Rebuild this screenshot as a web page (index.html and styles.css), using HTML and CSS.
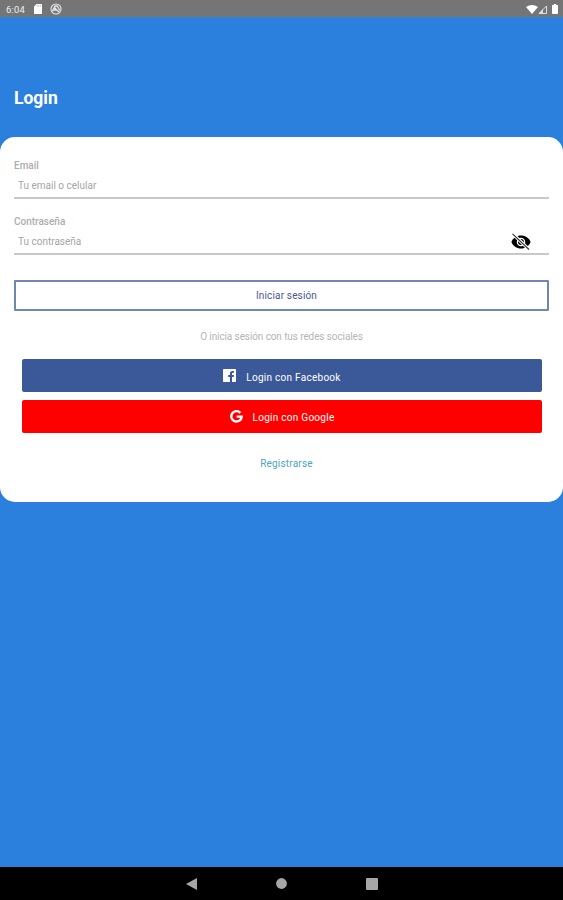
FILE: index.html
```html
<!DOCTYPE html>
<html lang="es">
<head>
  <meta charset="UTF-8">
  <meta name="viewport" content="width=device-width, initial-scale=1.0">
  <title>Login</title>
  <link rel="stylesheet" href="styles.css">
</head>
<body>
  <div class="status-bar">
    <span class="time">6:04</span>
    <svg class="sd" width="8" height="10" viewBox="0 0 8 10"><path fill="#fff" d="M2.6 0H7.2a.8.8 0 0 1 .8.8v8.4a.8.8 0 0 1-.8.8H.8a.8.8 0 0 1-.8-.8V2.6z"/><path stroke="#aaa" stroke-width=".7" d="M3.2 1.2v1.6M4.8 1.2v1.6M6.400 1.2v1.6"/></svg>
    <svg class="sync" width="12" height="12" viewBox="0 0 12 12" fill="none" stroke="#e8e8e8"><circle cx="6" cy="6" r="5" stroke-width="1.1"/><path stroke-width="1.3" d="M2.5 8.3L5 3h2.2l2.5 4.5M4.2 4.3l4.6 4.8M3 7h3.5"/></svg>
    <div class="signals">
      <svg width="12" height="9" viewBox="0 0 12 9"><path fill="#fff" d="M0 2Q6-2 12 2L6 9z"/></svg>
      <svg width="9" height="9" viewBox="0 0 9 9"><path fill="none" stroke="#e0e0e0" d="M8.500 1v7.500H1z"/><path fill="#e0e0e0" d="M5 4v4.500H1z"/></svg>
      <svg class="battery" width="6" height="10" viewBox="0 0 6 10"><path fill="#fff" d="M1.8 0h2.4v1H5.400l.6.6v7.800l-.6.6H.6L0 9.400V1.600L.6 1h1.200z"/></svg>
    </div>
  </div>

  <main>
    <h1>Login</h1>
    <form class="card">
      <label for="email">Email</label>
      <div class="field">
        <input type="text" id="email" placeholder="Tu email o celular">
      </div>
      <label for="password">Contraseña</label>
      <div class="field">
        <input type="password" id="password" placeholder="Tu contraseña">
        <svg class="eye" width="20" height="17" viewBox="0 0 20 17">
          <path fill="#000" d="M.4 9C2 5 5.500 2.500 10 2.500S18 5 19.600 9C18 13 14.500 15.500 10 15.500S2 13 .4 9z"/>
          <circle cx="10" cy="9" r="3.600" fill="#000" stroke="#fff" stroke-width="1.300"/>
          <path stroke="#fff" stroke-width="3.200" d="M2 1l16 15.500"/>
          <path stroke="#333" stroke-width="1.100" d="M1.500 .8l16.500 15.700"/>
        </svg>
      </div>
      <button type="button" class="btn-login">Iniciar sesión</button>
      <p class="hint">O inicia sesión con tus redes sociales</p>
      <button type="button" class="btn-social facebook">
        <svg width="13" height="13" viewBox="0 0 13 13"><path fill="#fff" d="M.7 0h11.600a.7.7 0 0 1 .7.7v11.600a.7.7 0 0 1-.7.7H9V8h1.700l.3-2H9V4.700c0-.6.3-.9 1-.9h1V2H9.400C7.700 2 6.900 3 6.900 4.500V6H5.200v2h1.700v5H.7a.7.7 0 0 1-.7-.7V.7A.7.7 0 0 1 .7 0z"/></svg>
        <span>Login con Facebook</span>
      </button>
      <button type="button" class="btn-social google">
        <svg width="13" height="13" viewBox="0 0 13 13"><path fill="none" stroke="#fff" stroke-width="2.400" d="M10.400 2.900A5.200 5.200 0 1 0 11.700 6.600H6.700"/></svg>
        <span>Login con Google</span>
      </button>
      <a class="register">Registrarse</a>
    </form>
  </main>

  <div class="nav-bar">
    <svg width="11" height="12" viewBox="0 0 11 12"><path fill="#a6a6a6" d="M11 0v12L0 6z"/></svg>
    <svg width="11" height="11" viewBox="0 0 11 11"><circle cx="5.5" cy="5.5" r="5.400" fill="#a6a6a6"/></svg>
    <svg width="12" height="12" viewBox="0 0 12 12"><rect width="12" height="12" rx="1" fill="#a6a6a6"/></svg>
  </div>
</body>
</html>
```
FILE: styles.css
```css
* {
  box-sizing: border-box;
}
body {
  margin: 0;
  height: 900px;
  display: flex;
  flex-direction: column;
  background-color: #2a80dc;
  font-family: Roboto, sans-serif;
  font-size: 10px;
}
svg {
  display: block;
  flex: none;
}
.status-bar {
  height: 17px;
  padding: 1px 5px 0 6px;
  display: flex;
  align-items: center;
  background-color: #757575;
  color: #eee;
}
.time {
  width: 28px;
  font-size: 9.5px;
  letter-spacing: 0.2px;
}
.sync {
  margin-left: 8px;
}
.signals {
  margin-left: auto;
  display: flex;
  align-items: center;
}
.battery {
  margin-left: 5px;
}
main {
  flex: 1;
}
h1 {
  margin: 0;
  height: 120px;
  padding: 71px 14px 0;
  color: #fff;
  font-size: 17.5px;
  font-weight: 700;
  line-height: 20px;
}
.card {
  height: 365px;
  padding: 22px 14px 0;
  display: flex;
  flex-direction: column;
  background-color: #fff;
  border-radius: 15px;
}
label {
  height: 12px;
  color: #adadad;
  font-weight: 500;
  line-height: 13px;
}
.field {
  height: 28px;
  margin-bottom: 16px;
  padding: 2px 18px 0 4px;
  display: flex;
  align-items: center;
  border-bottom: 2px solid #c8c8c8;
}
input {
  flex: 1;
  padding: 0;
  border: none;
  outline: none;
  background: none;
  font: inherit;
}
input::placeholder {
  color: #a5a5a5;
  opacity: 1;
}
button {
  padding: 0;
  font: inherit;
}
.btn-login {
  height: 31px;
  margin-top: 9px;
  padding-left: 10px;
  background: #fff;
  border: 2px solid #7186b3;
  border-radius: 1px;
  color: #4b5791;
  letter-spacing: 0.15px;
}
.hint {
  margin: 19px 0 17px;
  color: #b5b5b5;
  letter-spacing: -0.1px;
  line-height: 13px;
  height: 12px;
  text-align: center;
}
.btn-social {
  height: 33px;
  margin: 0 7px 8px 8px;
  display: flex;
  align-items: center;
  justify-content: center;
  gap: 10px;
  border: none;
  border-radius: 2px;
  color: #fff;
  letter-spacing: 0.27px;
}
.btn-social svg {
  margin-bottom: 1px;
}
.btn-social span {
  margin-top: 3px;
}
.facebook {
  background-color: #3b5998;
}
.google {
  background-color: #f00;
}
.google span {
  margin-top: 2px;
}
.register {
  margin-top: 16px;
  padding-left: 10px;
  color: #4ba6c2;
  letter-spacing: 0.2px;
  line-height: 13px;
  text-align: center;
}
.nav-bar {
  height: 33px;
  display: flex;
  align-items: center;
  justify-content: center;
  gap: 79px;
  background-color: #000;
}
```
